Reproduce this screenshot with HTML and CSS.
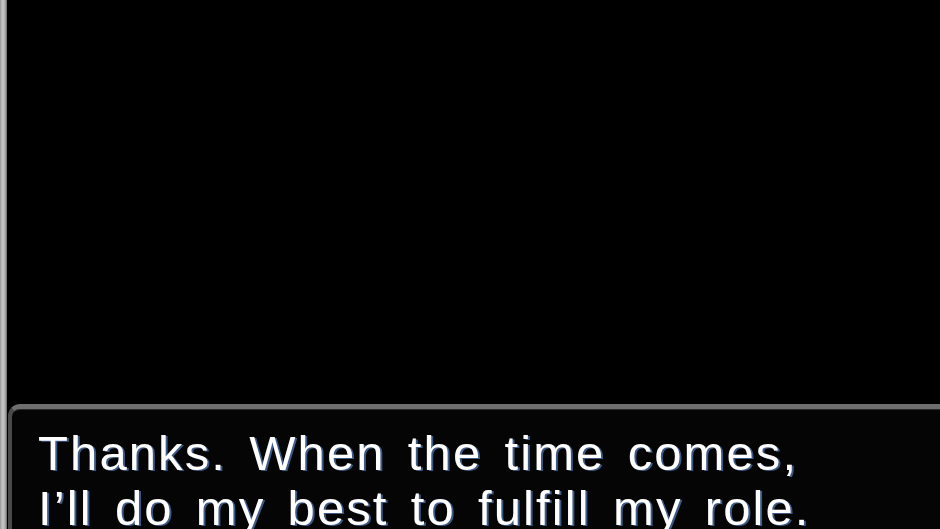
FILE: index.html
```html
<!DOCTYPE html>
<html>
<head>
<meta charset="utf-8">
<link rel="stylesheet" href="styles.css">
</head>
<body>
<div class="screen">
  <div class="edge"></div>
  <div class="main">
    <div class="scene"></div>
    <div class="dialog">
      <p class="line">Thanks. When the time comes,</p>
      <p class="line">I’ll do my best to fulfill my role.</p>
    </div>
  </div>
</div>
</body>
</html>
```
FILE: styles.css
```css
html, body {
  margin: 0;
  padding: 0;
  background: #000;
  overflow: hidden;
}
.screen {
  width: 940px;
  height: 529px;
  display: flex;
  overflow: hidden;
}
.edge {
  width: 7px;
  flex: none;
  background: linear-gradient(to right, #9a9a9a, #c8c8c8 40%, #b0b0b0 70%, #6a6a6a);
}
.main {
  flex: 1;
  display: flex;
  flex-direction: column;
  background: #000;
}
.scene {
  height: 404px;
  flex: none;
}
.dialog {
  flex: 1;
  margin-left: 1px;
  background: #050505;
  border-top: 5px solid #6e6e6e;
  border-left: 4px solid #4a4a4a;
  border-top-left-radius: 12px;
  box-shadow: inset 0 1px 0 #2a2a2a;
  padding: 17px 0 0 26px;
}
.line {
  margin: 0;
  font-family: "Liberation Sans", Arial, sans-serif;
  font-size: 49px;
  line-height: 55px;
  letter-spacing: 2.1px;
  word-spacing: 6.5px;
  color: #fff;
  text-shadow: 2px 1px #3d5a86;
  white-space: nowrap;
}
```
